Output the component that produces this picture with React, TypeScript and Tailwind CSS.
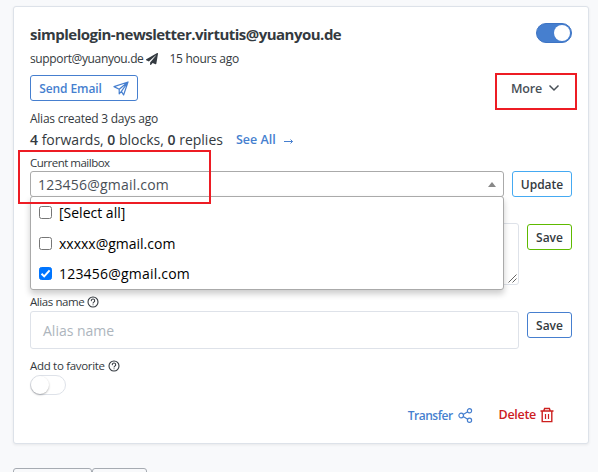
import type { ReactNode } from 'react';

function HelpIcon() {
  return (
    <svg viewBox="0 0 24 24" className="size-[12px] shrink-0" fill="none" stroke="currentColor" strokeWidth="2.2" strokeLinecap="round" strokeLinejoin="round">
      <circle cx="12" cy="12" r="10" />
      <path d="M8.6 9.2a3.4 3.4 0 0 1 6.8.6c0 2-3.2 2.6-3.2 4.2M12.1 17.4v.2" />
    </svg>
  );
}

function FieldLabel({ children, help, className }: { children: ReactNode; help?: boolean; className: string }) {
  return (
    <div className="flex h-4 items-center gap-[3px]">
      <span className={`text-[11.5px] whitespace-nowrap ${className}`}>{children}</span>
      {help && <HelpIcon />}
    </div>
  );
}

function OutlineButton({ children, className }: { children: ReactNode; className: string }) {
  return (
    <button className={`flex h-[26px] shrink-0 items-center justify-center rounded-[3px] border bg-white pt-px text-[12px] font-semibold text-[#343a40] ${className}`}>
      {children}
    </button>
  );
}

function Option({ children, checked, className }: { children: ReactNode; checked?: boolean; className: string }) {
  return (
    <div className="flex items-center gap-[7px] pl-2">
      <span className={`flex size-[13px] items-center justify-center rounded-[2.5px] border ${checked ? 'border-[#0075ff] bg-[#0075ff]' : 'border-[#767676] bg-white'}`}>
        {checked && (
          <svg viewBox="0 0 13 13" className="size-[13px] shrink-0" fill="none" stroke="white" strokeWidth="2">
            <path d="M2.5 6.8 5.2 9.4 10.6 3.4" />
          </svg>
        )}
      </span>
      <span className={`text-[14px] whitespace-nowrap text-black ${className}`}>{children}</span>
    </div>
  );
}

export default function App() {
  return (
    <div className="relative h-[472px] w-[598px] overflow-hidden bg-[#f8f9fb] pt-[6px] pl-[13px] font-['Open_Sans','Noto_Sans',sans-serif] text-[#343a40]">
      <main className="flex h-[438px] w-[576px] flex-col rounded-[3px] border border-[#dde2e9] bg-white px-4 pt-4 shadow-[0_1px_3px_rgba(0,0,0,0.07)]">
        <div className="flex h-5 items-center justify-between">
          <h1 className="pt-[2px] text-[15px] font-bold tracking-[-0.51px] whitespace-nowrap">simplelogin-newsletter.virtutis@yuanyou.de</h1>
          <span className="flex h-5 w-9 items-center justify-end rounded-full border border-[#3d74c4] bg-[#467fcf] pr-px">
            <span className="size-4 rounded-full bg-white" />
          </span>
        </div>

        <div className="mt-2 flex h-4 items-center text-[12px] whitespace-nowrap">
          <span className="tracking-[-0.37px]">support@yuanyou.de</span>
          <svg viewBox="0 0 512 512" className="ml-[3px] size-3" fill="currentColor">
            <path d="M476 3 12 271c-18 10-16 36 3 43l106 45L409 105c6-5 13 3 9 8L176 407v80c0 24 28 33 42 16l64-77 125 52c14 6 30-3 33-18L512 28c3-20-18-35-36-25Z" />
          </svg>
          <span className="ml-[11px] tracking-[-0.3px]">15 hours ago</span>
        </div>

        <div className="mt-2 flex h-[26px] items-center justify-between">
          <button className="flex h-[26px] w-[108px] items-center rounded-[3px] border border-[#467fcf] pl-2 text-[12px] font-semibold text-[#467fcf]">
            <span className="w-[63px] pt-px tracking-[-0.1px] whitespace-nowrap">Send Email</span>
            <svg viewBox="0 0 16 16" className="ml-[11px] size-4" fill="none" stroke="currentColor" strokeWidth="1.2" strokeLinejoin="round">
              <path d="M1 6.6 15 2 10.6 15 8.4 11.4 6.2 13.8V9.2ZM6.2 9.2 15 2 8.4 11.4" />
            </svg>
          </button>
          <div className="flex items-center pr-[12px] text-[12.5px] font-semibold text-[#495057]">
            <span className="pt-[2px] tracking-[-0.2px]">More</span>
            <svg viewBox="0 0 12 12" className="ml-1.5 size-3" fill="none" stroke="currentColor" strokeWidth="1.5">
              <path d="m1.5 3.5 4.5 4.5 4.5-4.5" />
            </svg>
          </div>
        </div>

        <div className="mt-[10px] flex h-4 items-center text-[12px] whitespace-nowrap"><span className="tracking-[-0.25px]">Alias created 3 days ago</span></div>
        <div className="mt-[2px] flex h-5 items-center whitespace-nowrap">
          <span className="text-[14px]"><b className="font-semibold">4</b> forwards, <b className="font-semibold">0</b> blocks, <b className="font-semibold">0</b> replies</span>
          <span className="ml-[13px] pt-[3px] text-[12.5px] font-semibold text-[#467fcf]">See All</span>
          <svg viewBox="0 0 10 8" className="mt-[3px] ml-2 h-2 w-[10px] text-[#467fcf]" fill="none" stroke="currentColor">
            <path d="M0 4.5H8.5M6.5 2.5l2 2-2 2" />
          </svg>
        </div>

        <div className="mt-[6px]"><FieldLabel className="tracking-[-0.5px]">Current mailbox</FieldLabel></div>
        <div className="flex justify-between">
          <div className="relative h-[26px] w-[474px] rounded-[3px] border border-[#aaa]">
            <div className="flex h-full items-center justify-between pr-[7px] pl-[7px] text-[14px] text-[#495057]">
              <span className="pt-px tracking-[0.2px]">123456@gmail.com</span>
              <svg viewBox="0 0 8 5" className="h-[5px] w-2" fill="#888"><path d="M0 5 4 0l4 5Z" /></svg>
            </div>
            <div className="absolute top-[24px] -left-px z-10 grid h-[94px] w-[474px] grid-rows-[30px_32px_29px] rounded-[3px] border border-[#aaa] bg-white shadow-[0_4px_6px_rgba(0,0,0,0.2)]">
              <Option className="tracking-[0px]">[Select all]</Option>
              <Option className="tracking-[0px]">xxxxx@gmail.com</Option>
              <Option checked className="tracking-[0.2px]">123456@gmail.com</Option>
            </div>
          </div>
          <OutlineButton className="w-[60px] border-[#45aaf2]">Update</OutlineButton>
        </div>

        <div className="mt-[26px] flex items-start justify-between">
          <div className="flex h-[62px] w-[489px] items-end justify-end rounded-[3px] border border-[#dee2e9]">
            <svg viewBox="0 0 9 9" className="mr-px mb-px size-[9px]" stroke="#555" strokeWidth="0.9"><path d="M.5 8.5l8-8M4.5 8.5l4-4" /></svg>
          </div>
          <OutlineButton className="mt-px w-[45px] border-[#5eba00]">Save</OutlineButton>
        </div>

        <div className="mt-[9px]"><FieldLabel help className="tracking-[-0.42px]">Alias name</FieldLabel></div>
        <div className="mt-px flex items-start justify-between">
          <div className="flex h-[38px] w-[489px] items-center rounded-[3px] border border-[#dee2e9] pl-3 text-[14px] text-[#adb5bd]"><span>Alias name</span></div>
          <OutlineButton className="mt-px w-[45px] border-[#467fcf]">Save</OutlineButton>
        </div>

        <div className="mt-[9px]"><FieldLabel help className="tracking-[-0.31px]">Add to favorite</FieldLabel></div>
        <span className="mt-px flex h-5 w-9 shrink-0 items-center rounded-full border border-[#dee2e9]">
          <span className="size-[18px] rounded-full bg-white shadow-[0_1px_2px_rgba(0,0,0,0.3)]" />
        </span>

        <div className="mt-[10px] flex h-5 items-center justify-end pr-[18px] text-[12.5px] font-semibold">
          <span className="pt-px text-[12px] tracking-[-0.5px] text-[#467fcf]">Transfer</span>
          <svg viewBox="0 0 15 15" className="ml-[5px] size-[15px] text-[#467fcf]" fill="none" stroke="currentColor" strokeWidth="1.2">
            <circle cx="3.2" cy="7.5" r="2.3" /><circle cx="11.5" cy="2.8" r="2.1" /><circle cx="11.5" cy="12.2" r="2.1" />
            <path d="m5.2 6.4 4.5-2.6M5.2 8.6l4.5 2.6" />
          </svg>
          <span className="ml-[26px] pt-px tracking-[-0.3px] text-[#cd201f]">Delete</span>
          <svg viewBox="0 0 14 16" className="ml-[4px] h-4 w-[14px] text-[#cd201f]" fill="none" stroke="currentColor" strokeWidth="1.4">
            <path d="M.5 4h13M3.8 3.7 4.6 1.5h4.8l.8 2.2M2.2 4v10.6h9.6V4" />
            <path d="M5.5 7v5M8.5 7v5" strokeWidth="1.2" />
          </svg>
        </div>
      </main>

      <div className="mt-6 flex">
        <div className="h-7 w-[79px] rounded-[3px] border border-[#a6abb2]" />
        <div className="h-7 w-[55px] rounded-[3px] border border-[#a6abb2]" />
      </div>

      <div className="absolute top-[73px] left-[495px] h-[37px] w-[82px] border-2 border-[#ed1c24]" />
      <div className="absolute top-[150px] left-[18px] z-20 h-[54px] w-[193px] border-2 border-[#ed1c24]" />
    </div>
  );
}
